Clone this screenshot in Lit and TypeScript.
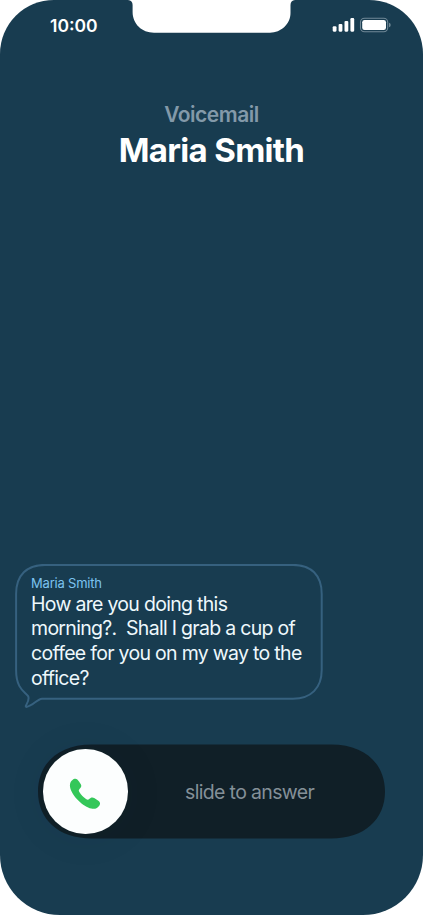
import { LitElement, html, css } from "lit";
import { customElement, property } from "lit/decorators.js";

@customElement("status-bar")
class StatusBar extends LitElement {
  static styles = css`
    :host {
      display: flex;
      justify-content: space-between;
      height: 50px;
      padding: 0 31px 0 50px;
      box-sizing: border-box;
      position: relative;
    }
    .time {
      font-size: 17.5px;
      font-weight: 580;
      line-height: 20px;
      letter-spacing: 0;
      margin-top: 16px;
    }
    .notch {
      position: absolute;
      top: 0;
      left: 0;
      width: 100%;
      height: 40px;
    }
    .icons {
      width: 60px;
      height: 16px;
      margin-top: 17px;
    }
  `;
  render() {
    return html`
      <svg class="notch" viewBox="0 0 423 40">
        <path
          fill="#fff"
          d="M128 0H295Q290.500 0.500 290.500 5V13C290.500 24 281 32.700 270 32.700H154C142 32.700 132.600 24 132.600 12V5Q132.600 0.500 128 0Z"
        />
      </svg>
      <div class="time">10:00</div>
      <svg class="icons" viewBox="332 17 60 16">
        <g fill="#fff">
          <rect x="332.700" y="26.200" width="3.800" height="5.500" rx="1.100" />
          <rect x="338.600" y="24" width="3.800" height="7.700" rx="1.100" />
          <rect x="344.500" y="21" width="3.800" height="10.700" rx="1.100" />
          <rect x="350.400" y="18.100" width="3.800" height="13.600" rx="1.100" />
          <rect x="362.200" y="19.900" width="23.800" height="10.100" rx="2.300" />
        </g>
        <rect x="360.500" y="18.200" width="27.200" height="13.500" rx="4" fill="none" stroke="#708896" stroke-width="1.100" />
        <path d="M389 22.700Q390.700 23.300 390.700 25T389 27.300Z" fill="#708896" />
      </svg>
    `;
  }
}

@customElement("message-bubble")
class MessageBubble extends LitElement {
  @property() sender = "";
  @property() text = "";
  static styles = css`
    :host {
      display: block;
      position: relative;
      width: 308px;
      height: 145px;
      padding: 11px 16px 0;
      box-sizing: border-box;
    }
    .outline {
      position: absolute;
      inset: 0;
      width: 308px;
      height: 145px;
    }
    .sender {
      font-size: 13px;
      line-height: 16px;
      letter-spacing: -0.2px;
      color: #7cc3ef;
    }
    .text {
      margin-top: 0.6px;
      font-size: 19.5px;
      line-height: 24.670px;
      letter-spacing: -0.7px;
      white-space: pre;
      color: #eef8fc;
    }
  `;
  render() {
    return html`
      <svg class="outline" viewBox="15 564 308 145">
        <path
          fill="none"
          stroke="#36617f"
          stroke-width="2"
          stroke-linejoin="round"
          d="M45 564.900H293C311 564.900 321.700 575 321.700 594V670C321.700 688 311 698.700 293 698.700H42C37 699 33 706 26.300 706.900C24 706 30 702 28.300 696.500C26 692 16.100 690 16.100 670V594C16.100 575 27 564.900 45 564.900Z"
        />
      </svg>
      <div class="sender">${this.sender}</div>
      <div class="text">${this.text}</div>
    `;
  }
}

@customElement("answer-slider")
class AnswerSlider extends LitElement {
  static styles = css`
    :host {
      display: flex;
      align-items: center;
      position: relative;
      width: 347px;
      height: 95px;
      padding-left: 5px;
      box-sizing: border-box;
    }
    .track {
      position: absolute;
      inset: 0;
    }
    .knob {
      position: relative;
      display: flex;
      align-items: center;
      justify-content: center;
      width: 84.600px;
      height: 84.600px;
      border-radius: 50%;
      background: #fcfefe;
      box-shadow: 0 2px 40px rgba(8, 35, 55, 0.08);
    }
    .handset {
      margin-top: 4px;
    }
    .label {
      position: relative;
      flex: 1;
      margin-left: 57.400px;
      font-size: 19.500px;
      line-height: 24px;
      letter-spacing: -0.65px;
      color: #849098;
      white-space: nowrap;
    }
  `;
  render() {
    return html`
      <svg class="track" width="347" height="95" viewBox="38 744 347 95">
        <path
          fill="#101f27"
          d="M86 744.500H331C365 744.500 385 764 385 791.500S365 838.500 331 838.500H92C58 838.500 38 819 38 791.500S58 744.500 92 744.500Z"
        />
      </svg>
      <div class="knob">
        <svg class="handset" width="32" height="32" viewBox="69 778 32 32">
          <path
            fill="#34c759"
            d="M74.500 778.800C76.400 778.200 77.700 779.500 79 781.500L80.800 784.300C81.900 786.200 81 787.300 79.700 788.700C78.500 790 78.500 790.800 79.500 792.300C81.200 795 83.400 797.200 86 799C87.500 800 88.200 799.900 89.500 798.800C91.300 797.400 92.300 797 94.200 798.100L98 800.600C100 802 100.600 803.500 99.600 805.200C97.700 808.300 95 809.300 91.300 808.600C83.500 807 71.700 796 70.100 787.300C69.400 783.500 71 780.200 74.500 778.800Z"
          />
        </svg>
      </div>
      <div class="label">slide to answer</div>
    `;
  }
}

@customElement("app-root")
class AppRoot extends LitElement {
  static styles = css`
    :host {
      display: block;
      width: 423px;
      height: 915px;
      background: #fff;
      font-family: Inter, "Liberation Sans", sans-serif;
      color: #fff;
    }
    .screen {
      display: flex;
      flex-direction: column;
      height: 915px;
      box-sizing: border-box;
      border-radius: 54px 54px 60px 60px;
      background: #183c50;
      overflow: hidden;
    }
    .caller {
      text-align: center;
      padding-top: 51px;
    }
    .kind {
      font-size: 21px;
      line-height: 28px;
      font-weight: 600;
      letter-spacing: -0.5px;
      color: #8399a9;
    }
    .name {
      font-size: 33px;
      line-height: 42px;
      font-weight: 700;
      letter-spacing: -0.68px;
    }
    message-bubble {
      margin: auto 0 0 15px;
    }
    answer-slider {
      margin: 35px 0 76px 38px;
    }
  `;
  render() {
    return html`
      <div class="screen">
        <status-bar></status-bar>
        <div class="caller">
          <div class="kind">Voicemail</div>
          <div class="name">Maria Smith</div>
        </div>
        <message-bubble
          sender="Maria Smith"
          .text=${"How are you doing this\nmorning?.  Shall I grab a cup of\ncoffee for you on my way to the\noffice?"}
        ></message-bubble>
        <answer-slider></answer-slider>
      </div>
    `;
  }
}
